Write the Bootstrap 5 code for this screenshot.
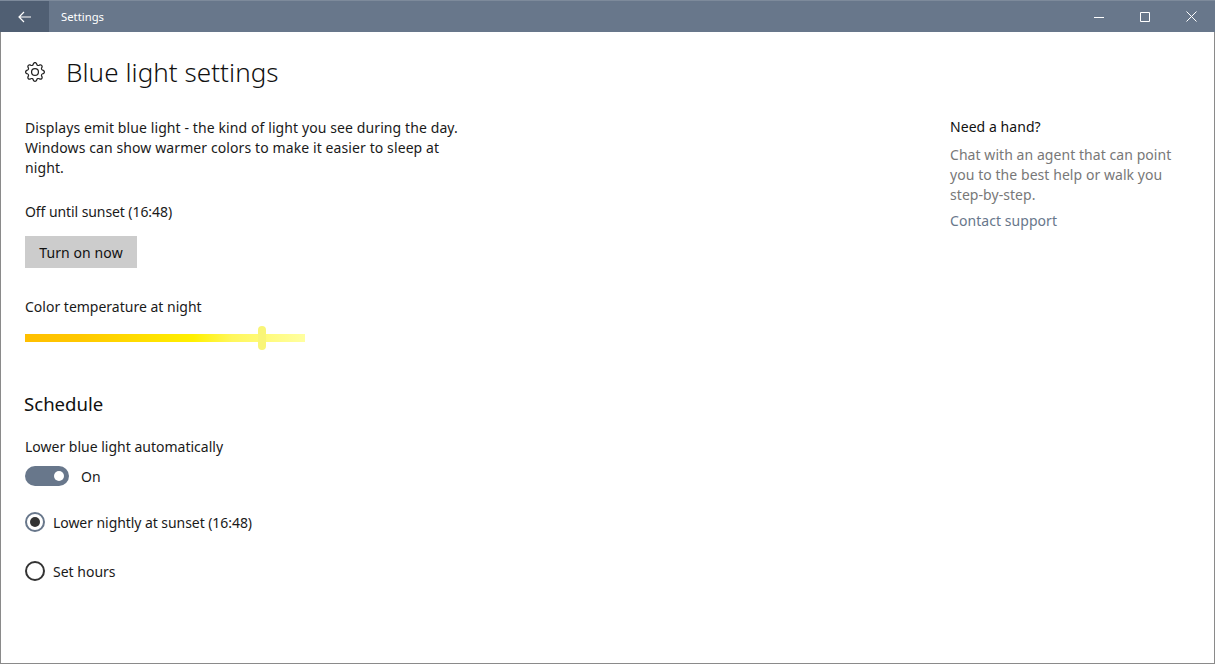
<!DOCTYPE html>
<html lang="en"><head><meta charset="utf-8"><title>Settings</title>
<link href="https://cdn.jsdelivr.net/npm/bootstrap@5.3.0/dist/css/bootstrap.min.css" rel="stylesheet">
<style>
html,body{height:664px;overflow:hidden;background:#fff}
body{font-family:"Noto Sans","Open Sans",sans-serif;font-size:14px;line-height:20px;color:#1a1a1a}
.win{height:664px;border:1px solid #8a8a8a;border-top:0;display:flex;flex-direction:column}
.tbar{height:32px;background:#68778b;border-top:1px solid #7d8a9b;margin:0 -1px;color:#fff;font-size:11.3px}
.backb{width:49px;height:31px;background:#505f73;color:#fff}
.ttl{margin-left:12px}
.wctl{margin-right:1px}
.wbtn{width:46px;height:31px}
.body-area{flex:1;padding:0 0 0 24px}
.lcol{width:925px}
.rcol{width:240px;padding-top:85px;color:#787878;letter-spacing:.06px}
.gear{width:20px;height:20px;margin-right:21px}
.hrow{height:80px}
h1.ttlh{font-size:26px;line-height:36px;font-weight:300;margin:0;color:#111;letter-spacing:.06px}
.para{width:445px;margin:0;padding-top:6px;letter-spacing:.1px}
.tnow{margin-top:24px;letter-spacing:-.08px}
.btn.grey{background:#ccc;border:0;border-radius:0;width:112px;height:32px;padding:0;font-size:14px;letter-spacing:.1px;color:#111;margin-top:14px}
.lbl{margin-top:29px}
.sld{position:relative;width:280px;height:8px;margin-top:17px;background:linear-gradient(90deg,#ffbf00 0%,#ffc800 20%,#fff000 60%,#fff75c 74%,#ffffa0 100%)}
.thb{position:absolute;top:-8px;width:8px;height:24px;border-radius:4px;background:#f9f577;transform:translateX(-4px)}
h2.sch{font-size:18.6px;line-height:28px;font-weight:400;margin:48px 0 0 -1px;color:#111}
.lb2{margin-top:19px}
.sw-row{margin-top:9px}
.r1{margin-top:26px;letter-spacing:-.06px}
.r2{margin-top:29px}
.ltxt{line-height:18px;padding-top:2px}
.togg{width:44px;height:20px;border-radius:10px;background:#68778b;position:relative;margin-right:12px}
.togg::after{content:"";position:absolute;right:5px;top:5px;width:10px;height:10px;border-radius:50%;background:#fff}
.rd{width:20px;height:20px;border-radius:50%;border:2px solid #333;margin-right:8px;flex:none;display:flex;align-items:center;justify-content:center}
.rd.sel{border-color:#68778b}
.rd.sel::after{content:"";width:10px;height:10px;border-radius:50%;background:#333}
.h3r{color:#111;margin-bottom:8px}
.ct{color:#68778b;margin-top:6px}
</style></head><body>
<div class="win">
<header class="tbar d-flex align-items-center">
<div class="backb d-flex align-items-center justify-content-center">
<svg width="14" height="12" viewBox="0 0 14 12" fill="none" stroke="#fff" stroke-width="1.2"><path d="M13 6H1M6 1 1 6l5 5"/></svg></div>
<span class="ttl">Settings</span>
<div class="ms-auto d-flex wctl">
<div class="wbtn d-flex align-items-center justify-content-center"><svg width="10" height="10" viewBox="0 0 10 10" stroke="#fff"><path d="M0 5.5h10"/></svg></div>
<div class="wbtn d-flex align-items-center justify-content-center"><svg width="10" height="10" viewBox="0 0 10 10" fill="none" stroke="#fff"><path d="M.5.5h9v9h-9z"/></svg></div>
<div class="wbtn d-flex align-items-center justify-content-center"><svg width="11" height="11" viewBox="0 0 11 11" stroke="#fff"><path d="M.5.5l10 10M10.5.5l-10 10"/></svg></div>
</div></header>
<main class="body-area d-flex">
<section class="lcol">
<div class="hrow d-flex align-items-center">
<svg class="gear" viewBox="0 0 16 16" fill="#222"><path d="M8 4.754a3.246 3.246 0 1 0 0 6.492 3.246 3.246 0 0 0 0-6.492zM5.754 8a2.246 2.246 0 1 1 4.492 0 2.246 2.246 0 0 1-4.492 0z"/><path d="M9.796 1.343c-.527-1.79-3.065-1.79-3.592 0l-.094.319a.873.873 0 0 1-1.255.52l-.292-.16c-1.64-.892-3.433.902-2.54 2.541l.159.292a.873.873 0 0 1-.52 1.255l-.319.094c-1.79.527-1.79 3.065 0 3.592l.319.094a.873.873 0 0 1 .52 1.255l-.16.292c-.892 1.64.901 3.434 2.541 2.54l.292-.159a.873.873 0 0 1 1.255.52l.094.319c.527 1.79 3.065 1.79 3.592 0l.094-.319a.873.873 0 0 1 1.255-.52l.292.16c1.64.893 3.434-.902 2.54-2.541l-.159-.292a.873.873 0 0 1 .52-1.255l.319-.094c1.79-.527 1.79-3.065 0-3.592l-.319-.094a.873.873 0 0 1-.52-1.255l.16-.292c.893-1.64-.902-3.433-2.541-2.54l-.292.159a.873.873 0 0 1-1.255-.52l-.094-.319zm-2.633.283c.246-.835 1.428-.835 1.674 0l.094.319a1.873 1.873 0 0 0 2.693 1.115l.291-.16c.764-.415 1.6.42 1.184 1.185l-.159.292a1.873 1.873 0 0 0 1.116 2.692l.318.094c.835.246.835 1.428 0 1.674l-.319.094a1.873 1.873 0 0 0-1.115 2.693l.16.291c.415.764-.42 1.6-1.185 1.184l-.291-.159a1.873 1.873 0 0 0-2.693 1.116l-.094.318c-.246.835-1.428.835-1.674 0l-.094-.319a1.873 1.873 0 0 0-2.692-1.115l-.292.16c-.764.415-1.6-.42-1.184-1.185l.159-.291A1.873 1.873 0 0 0 1.945 8.93l-.319-.094c-.835-.246-.835-1.428 0-1.674l.319-.094A1.873 1.873 0 0 0 3.06 4.377l-.16-.292c-.415-.764.42-1.6 1.185-1.184l.292.159a1.873 1.873 0 0 0 2.692-1.115l.094-.319z"/></svg>
<h1 class="ttlh">Blue light settings</h1></div>
<p class="para">Displays emit blue light - the kind of light you see during the day. Windows can show warmer colors to make it easier to sleep at night.</p>
<div class="tnow">Off until sunset (16:48)</div>
<button class="btn grey d-block" type="button">Turn on now</button>
<div class="lbl">Color temperature at night</div>
<div class="sld"><div class="thb" style="left:84.64%"></div></div>
<h2 class="sch">Schedule</h2>
<div class="lb2">Lower blue light automatically</div>
<div class="d-flex align-items-center sw-row"><div class="togg"></div><span class="ltxt">On</span></div>
<div class="d-flex align-items-center r1"><div class="rd sel"></div><span class="ltxt">Lower nightly at sunset (16:48)</span></div>
<div class="d-flex align-items-center r2"><div class="rd"></div><span class="ltxt">Set hours</span></div>
</section>
<aside class="rcol">
<div class="h3r">Need a hand?</div>
<div>Chat with an agent that can point you to the best help or walk you step-by-step.</div>
<div class="ct">Contact support</div>
</aside>
</main>
</div>
</body></html>
